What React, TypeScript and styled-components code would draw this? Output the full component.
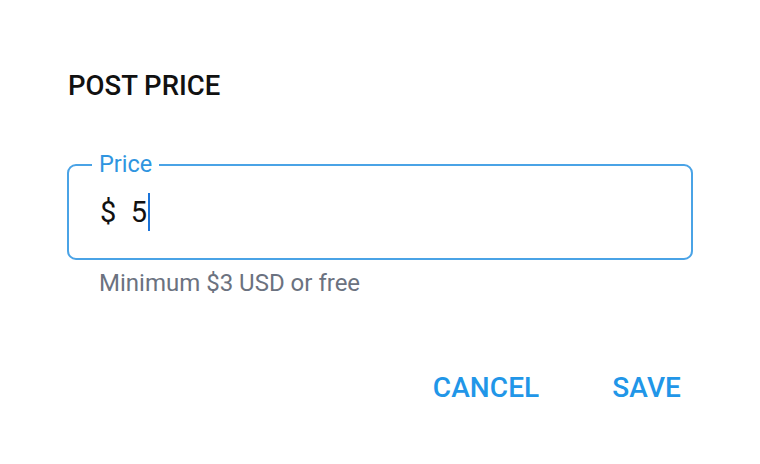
import React from 'react';
import styled, { createGlobalStyle } from 'styled-components';

const GlobalStyle = createGlobalStyle`
  html, body {
    margin: 0;
    padding: 0;
    background: #ffffff;
    font-family: Roboto, "Liberation Sans", sans-serif;
  }
`;

const Dialog = styled.div`
  width: 760px;
  height: 464px;
  box-sizing: border-box;
  padding: 70px 67px 0 67px;
  display: flex;
  flex-direction: column;
`;

const Title = styled.h2`
  margin: 0 0 0 1px;
  font-size: 27.5px;
  font-weight: 500;
  color: #111;
  line-height: 32px;
`;

const Field = styled.div`
  position: relative;
  margin-top: 62px;
  padding: 0 31px;
  height: 96px;
  box-sizing: border-box;
  border: 2px solid #4aa3e6;
  border-radius: 9px;
  display: flex;
  align-items: center;
`;

const Legend = styled.span`
  position: absolute;
  left: 23px;
  top: -15px;
  padding: 0 7px;
  background: #fff;
  font-size: 23.5px;
  color: #2f95e0;
  line-height: 26px;
`;

const Value = styled.div`
  display: flex;
  align-items: center;
  font-size: 29px;
  color: #111;
  white-space: pre;
`;

const Caret = styled.span`
  display: inline-block;
  width: 2px;
  height: 38px;
  margin-left: 1px;
  background: #1a73d9;
`;

const Helper = styled.div`
  margin: 9px 0 0 32px;
  font-size: 24px;
  color: #6b7280;
  line-height: 28px;
`;

const Actions = styled.div`
  display: flex;
  justify-content: flex-end;
  gap: 73px;
  margin-top: 75px;
  padding-right: 12px;
`;

const TextButton = styled.button`
  border: 0;
  background: none;
  padding: 0;
  font-family: inherit;
  font-size: 28px;
  line-height: 32px;
  font-weight: 500;
  letter-spacing: 0.1px;
  color: #2196e8;
  cursor: pointer;
`;

export default function App() {
  return (
    <>
      <GlobalStyle />
      <Dialog>
        <Title>POST PRICE</Title>
        <Field>
          <Legend>Price</Legend>
          <Value>
            {'$  5'}
            <Caret />
          </Value>
        </Field>
        <Helper>Minimum $3 USD or free</Helper>
        <Actions>
          <TextButton>CANCEL</TextButton>
          <TextButton>SAVE</TextButton>
        </Actions>
      </Dialog>
    </>
  );
}
